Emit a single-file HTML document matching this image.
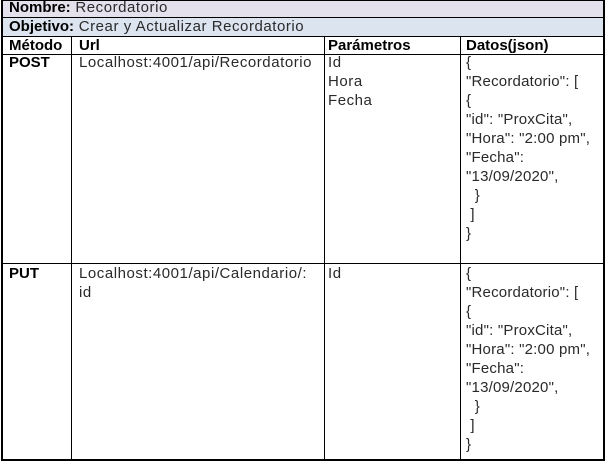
<!DOCTYPE html>
<html><head><meta charset="utf-8"><style>
body{margin:0;width:607px;height:462px;background:#fff;position:relative;font-family:"Liberation Sans",sans-serif;font-size:15px;color:#2a2a2a;overflow:hidden}
.a{position:absolute}
.h{background:#000}
.t{position:absolute;line-height:19px;white-space:nowrap;letter-spacing:0.55px}
b{font-weight:bold;color:#000;letter-spacing:0}
</style></head><body>
<div class="a" style="left:1px;top:0;width:603px;height:17px;background:#e5e1ec"></div>
<div class="a" style="left:1px;top:17px;width:603px;height:19px;background:#dce4f0"></div>
<div class="a h" style="left:1px;top:0;width:604px;height:1px"></div>
<div class="a h" style="left:1px;top:17px;width:604px;height:1px"></div>
<div class="a h" style="left:1px;top:36px;width:604px;height:1px"></div>
<div class="a h" style="left:1px;top:54px;width:604px;height:1px"></div>
<div class="a h" style="left:1px;top:263px;width:604px;height:1px"></div>
<div class="a h" style="left:1px;top:459px;width:604px;height:2px"></div>
<div class="a h" style="left:1px;top:0;width:2px;height:461px"></div>
<div class="a h" style="left:603px;top:0;width:2px;height:461px"></div>
<div class="a h" style="left:71px;top:36px;width:1px;height:424px"></div>
<div class="a h" style="left:324px;top:36px;width:1px;height:424px"></div>
<div class="a h" style="left:460px;top:36px;width:1px;height:424px"></div>

<div class="t" style="left:9px;top:-2px"><b>Nombre:</b> Recordatorio</div>
<div class="t" style="left:9px;top:17px"><b>Objetivo:</b> Crear y Actualizar Recordatorio</div>
<div class="t" style="left:9px;top:36px"><b>Método</b></div>
<div class="t" style="left:79px;top:36px"><b>Url</b></div>
<div class="t" style="left:328px;top:36px"><b>Parámetros</b></div>
<div class="t" style="left:466px;top:36px"><b>Datos(json)</b></div>

<div class="t" style="left:9px;top:53px"><b>POST</b></div>
<div class="t" style="left:79px;top:53px">Localhost:4001/api/Recordatorio</div>
<div class="t" style="left:328px;top:53px">Id<br>Hora<br>Fecha</div>
<div class="t" style="left:466px;top:53px;letter-spacing:0.2px">{<br>"Recordatorio": [<br>{<br>"id": "ProxCita",<br>"Hora": "2:00 pm",<br>"Fecha":<br>"13/09/2020",<br>&nbsp;&nbsp;}<br>&nbsp;]<br>}</div>

<div class="t" style="left:9px;top:264px"><b>PUT</b></div>
<div class="t" style="left:79px;top:264px">Localhost:4001/api/Calendario/:<br>id</div>
<div class="t" style="left:328px;top:264px">Id</div>
<div class="t" style="left:466px;top:264px;letter-spacing:0.2px">{<br>"Recordatorio": [<br>{<br>"id": "ProxCita",<br>"Hora": "2:00 pm",<br>"Fecha":<br>"13/09/2020",<br>&nbsp;&nbsp;}<br>&nbsp;]<br>}</div>
</body></html>
